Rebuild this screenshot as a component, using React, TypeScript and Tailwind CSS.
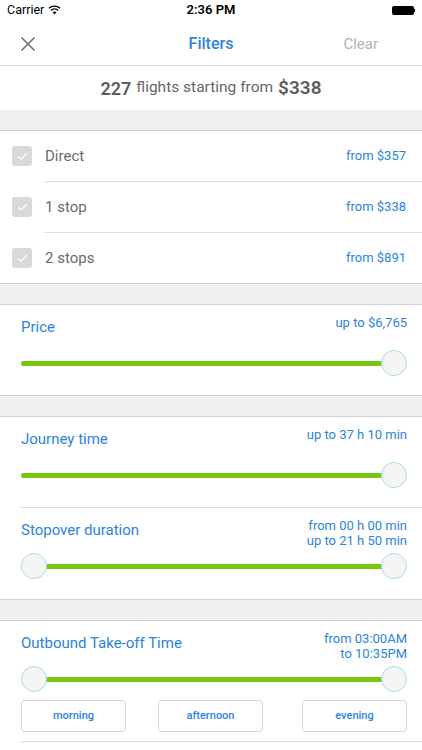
import React from "react";

const BLUE = "text-[#2b84dc]";

function Slider({ left, right }: { left?: boolean; right?: boolean }) {
  return (
    <div className="relative h-[26px] ml-[21px] mr-[15px]">
      <div className={`absolute top-[11px] h-[5px] rounded-full bg-[#7ac70f] ${left ? "left-[12px]" : "left-0"} ${right ? "right-[12px]" : "right-0"}`} />
      {left && (
        <div className="absolute left-0 top-0 w-[26px] h-[26px] rounded-full bg-[#f5f5f5] border border-[#a8dcee]" />
      )}
      {right && (
        <div className="absolute right-0 top-0 w-[26px] h-[26px] rounded-full bg-[#f5f5f5] border border-[#a8dcee]" />
      )}
    </div>
  );
}

function Header({ title, lines }: { title: string; lines: string[] }) {
  return (
    <div className="flex justify-between items-start h-[35px] pl-[21px] pr-[15px]">
      <div className={`mt-[2px] text-[15px] leading-[20px] ${BLUE}`}>{title}</div>
      <div className={`text-[13px] leading-[15px] text-right ${BLUE}`}>
        {lines.map((l) => (
          <div key={l}>{l}</div>
        ))}
      </div>
    </div>
  );
}

function Check() {
  return (
    <div className="w-[20px] h-[20px] rounded-[3px] bg-[#d9d9d9] flex items-center justify-center">
      <svg width="11" height="9" viewBox="0 0 11 9" fill="none">
        <path d="M1.5 4.8 L4 7.2 L9.5 1.5" stroke="white" strokeWidth="1.2" strokeLinecap="round" strokeLinejoin="round" />
      </svg>
    </div>
  );
}

function StopRow({ label, price, last }: { label: string; price: string; last?: boolean }) {
  return (
    <div className="flex items-stretch pl-[12px]">
      <div className="flex items-center h-[50px]">
        <Check />
      </div>
      <div className={`flex-1 ml-[13px] flex items-center justify-between pr-[16px] ${last ? "h-[50px]" : "h-[51px] border-b border-[#dcdcdc]"}`}>
        <span className="text-[15px] text-[#6b6b6b]">{label}</span>
        <span className={`text-[13px] ${BLUE}`}>{price}</span>
      </div>
    </div>
  );
}

function Gap() {
  return <div className="h-[20px] bg-[#f0f0f0]" />;
}

export default function App() {
  return (
    <div
      className="w-[422px] h-[750px] bg-white overflow-hidden"
      style={{ fontFamily: "Roboto, 'Noto Sans', 'Liberation Sans', sans-serif" }}
    >
      {/* status bar */}
      <div className="h-[20px] grid grid-cols-3 items-center px-[7px] text-[12.5px] text-black">
        <div className="flex items-center gap-[4px]">
          <span>Carrier</span>
          <svg width="13" height="10" viewBox="0 0 13 10">
            <path d="M6.5 9.5 L4.6 7.3 A2.8 2.8 0 0 1 8.4 7.3 Z" fill="black" />
            <path d="M2.9 5.4 A5.3 5.3 0 0 1 10.1 5.4" stroke="black" strokeWidth="1.4" fill="none" />
            <path d="M1 3.3 A8 8 0 0 1 12 3.3" stroke="black" strokeWidth="1.4" fill="none" />
          </svg>
        </div>
        <div className="text-center font-semibold text-[13px]">2:36 PM</div>
        <div className="flex justify-end items-center">
          <div className="w-[22px] h-[9px] bg-black rounded-[2px]" />
          <div className="w-[1.5px] h-[3px] bg-black" />
        </div>
      </div>
      {/* nav */}
      <div className="h-[46px] pt-[3px] grid grid-cols-3 items-center border-b border-[#dedede]">
        <div className="pl-[21px] flex">
          <svg width="14" height="14" viewBox="0 0 14 14">
            <path d="M1 1 L13 13 M13 1 L1 13" stroke="#757575" strokeWidth="1.7" strokeLinecap="round" />
          </svg>
        </div>
        <div className={`text-center text-[16px] font-medium ${BLUE}`}>Filters</div>
        <div className="text-right pr-[44px] text-[15px] text-[#b3b3b3]">Clear</div>
      </div>
      {/* summary */}
      <div className="h-[44px] flex items-center justify-center text-[#5c5c5c]">
        <span className="text-[18px] font-semibold">227</span>
        <span className="text-[15.5px] ml-[5px] text-[#666]">flights starting from</span>
        <span className="text-[19px] font-semibold ml-[5px]">$338</span>
      </div>
      <Gap />
      {/* stops */}
      <div className="border-y border-[#cfcfcf]">
        <StopRow label="Direct" price="from $357" />
        <StopRow label="1 stop" price="from $338" />
        <StopRow label="2 stops" price="from $891" last />
      </div>
      <Gap />
      {/* price */}
      <div className="border-y border-[#cfcfcf] pt-[10px] pb-[19px]">
        <Header title="Price" lines={["up to $6,765"]} />
        <Slider right />
      </div>
      <Gap />
      {/* journey + stopover */}
      <div className="border-y border-[#cfcfcf]">
        <div className="pt-[10px] pb-[19px]">
          <Header title="Journey time" lines={["up to 37 h 10 min"]} />
          <Slider right />
        </div>
        <div className="ml-[21px] border-t border-[#dcdcdc]" />
        <div className="pt-[10px] pb-[20px]">
          <Header title="Stopover duration" lines={["from 00 h 00 min", "up to 21 h 50 min"]} />
          <Slider left right />
        </div>
      </div>
      <Gap />
      {/* outbound */}
      <div className="border-t border-[#cfcfcf]">
        <div className="pt-[10px] pb-[9px]">
          <Header title="Outbound Take-off Time" lines={["from 03:00AM", "to 10:35PM"]} />
          <Slider left right />
          <div className="flex pl-[21px] pr-[15px] mt-[8px]">
            {["morning", "afternoon", "evening"].map((t, i) => (
              <div
                key={t}
                className={`w-[105px] h-[32px] rounded-[4px] border border-[#d6d6d6] flex items-center justify-center text-[11px] font-medium ${BLUE} ${i === 1 ? "ml-[32px]" : ""} ${i === 2 ? "ml-auto" : ""}`}
              >
                {t}
              </div>
            ))}
          </div>
        </div>
        <div className="ml-[21px] border-t border-[#dcdcdc]" />
      </div>
    </div>
  );
}
